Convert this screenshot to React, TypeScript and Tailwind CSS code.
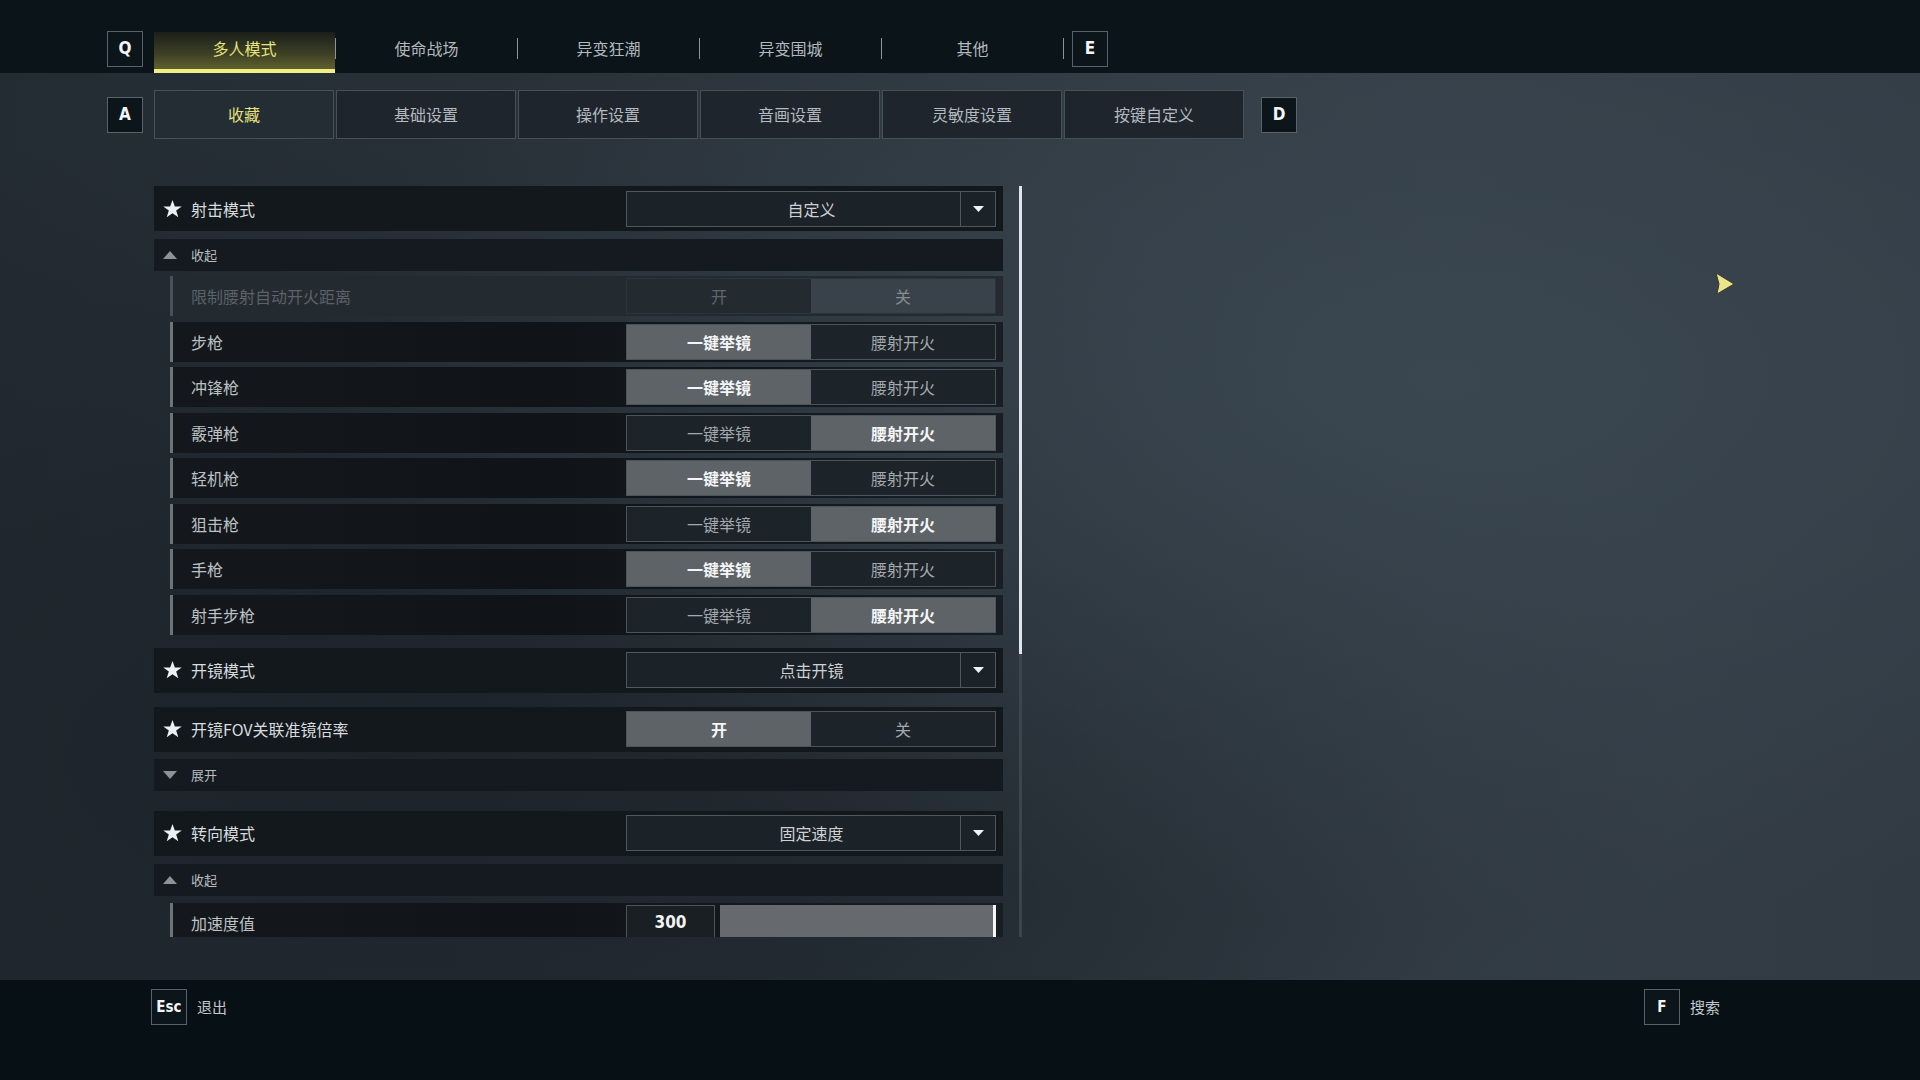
import React from 'react';

const FONT = { fontFamily: '"Noto Sans CJK SC", "Noto Sans", sans-serif' };
const KEYFONT = { fontFamily: '"DejaVu Sans Condensed", "Liberation Sans", sans-serif' };

const TOP_TABS = ['多人模式', '使命战场', '异变狂潮', '异变围城', '其他'];
const SUB_TABS = ['收藏', '基础设置', '操作设置', '音画设置', '灵敏度设置', '按键自定义'];

const WEAPONS: { label: string; sel: 0 | 1 }[] = [
  { label: '步枪', sel: 0 },
  { label: '冲锋枪', sel: 0 },
  { label: '霰弹枪', sel: 1 },
  { label: '轻机枪', sel: 0 },
  { label: '狙击枪', sel: 1 },
  { label: '手枪', sel: 0 },
  { label: '射手步枪', sel: 1 },
];

function Key({ k, small }: { k: string; small?: boolean }) {
  return (
    <div
      style={KEYFONT}
      className={`flex h-[36px] shrink-0 items-center justify-center border border-[#58626a] bg-[#0c1519] font-bold text-[#f2f4f5] ${
        small ? 'w-[36px] text-[15px]' : 'w-[36px] text-[17px]'
      }`}
    >
      {k}
    </div>
  );
}

function Star() {
  return (
    <svg width="19" height="18" viewBox="0 0 24 23" className="shrink-0">
      <path d="M12 0l3 8.2h8.8l-7.1 5.3 2.7 8.5L12 16.8 4.6 22l2.7-8.5L.2 8.2H9z" fill="#eef1f3" />
    </svg>
  );
}

function Tri({ up }: { up: boolean }) {
  return (
    <svg width="14" height="8" viewBox="0 0 14 8" className="shrink-0">
      <path d={up ? 'M7 0L14 8H0z' : 'M0 0h14L7 8z'} fill="#8b9298" />
    </svg>
  );
}

function Dropdown({ value }: { value: string }) {
  return (
    <div className="flex h-[36px] w-[370px] border border-[#4f575f] bg-[#1b2228]">
      <div className="flex flex-1 items-center justify-center pl-[36px] text-[16px] text-[#cdd1d4]">{value}</div>
      <div className="flex w-[35px] items-center justify-center border-l border-[#4f575f]">
        <svg width="11" height="6" viewBox="0 0 11 6">
          <path d="M0 0h11L5.5 6z" fill="#f1f3f4" />
        </svg>
      </div>
    </div>
  );
}

function Toggle({ options, sel, disabled }: { options: [string, string]; sel: 0 | 1; disabled?: boolean }) {
  return (
    <div className={`flex h-[36px] w-[370px] border ${disabled ? 'border-[#2c343a]' : 'border-[#4b535b]'}`}>
      {options.map((o, i) => {
        const on = i === sel;
        let cls = '';
        if (disabled) cls = on ? 'bg-[#39414a] text-[#858c92]' : 'bg-[#232a30] text-[#5f666c]';
        else cls = on ? 'bg-[#5e6368] text-[#f4f5f6] font-bold' : 'bg-[#1c2329] text-[#a3a9ae]';
        return (
          <div key={o} className={`flex flex-1 items-center justify-center text-[16px] ${cls}`}>
            {o}
          </div>
        );
      })}
    </div>
  );
}

function MainRow({ label, children, className = '' }: { label: string; children: React.ReactNode; className?: string }) {
  return (
    <div className={`flex h-[45px] items-center bg-[#13181d] pr-[7px] ${className}`}>
      <div className="flex flex-1 items-center gap-[9px] pl-[9px]">
        <Star />
        <span className="text-[16px] text-[#d8dcdf]">{label}</span>
      </div>
      {children}
    </div>
  );
}

function Fold({ up, className = '' }: { up: boolean; className?: string }) {
  return (
    <div className={`flex h-[32px] items-center gap-[14px] bg-[#141a1f] pl-[9px] ${className}`}>
      <Tri up={up} />
      <span className="text-[13px] text-[#b8bdc1]">{up ? '收起' : '展开'}</span>
    </div>
  );
}

function SubRow({ label, children, disabled, className = '' }: { label: string; children: React.ReactNode; disabled?: boolean; className?: string }) {
  return (
    <div
      className={`ml-[16px] flex h-[40px] items-center border-l-[3px] pr-[7px] ${
        disabled ? 'border-[#4a5157] bg-[#232a30]' : 'border-[#6d747a] bg-[linear-gradient(90deg,#14181c_0%,#101418_45%,#181e23_100%)]'
      } ${className}`}
    >
      <span className={`flex-1 pl-[18px] text-[16px] ${disabled ? 'text-[#5b6268]' : 'text-[#bcc1c5]'}`}>{label}</span>
      {children}
    </div>
  );
}

export default function App() {
  return (
    <div
      style={FONT}
      className="relative flex h-[1080px] w-[1920px] flex-col overflow-hidden bg-[radial-gradient(ellipse_at_75%_35%,#3a4650_0%,transparent_55%),radial-gradient(ellipse_at_20%_70%,#1c2329_0%,transparent_60%),linear-gradient(90deg,#242c33_0%,#2b343c_45%,#343e47_75%,#313a43_100%)]"
    >
      {/* top tabs */}
      <header className="flex h-[73px] shrink-0 items-start bg-[#0a1419] pl-[107px] pt-[31px]">
        <Key k="Q" />
        <div className="ml-[11px] mt-[1px] flex h-[41px] items-start">
          {TOP_TABS.map((t, i) => (
            <React.Fragment key={t}>
              {i === 0 ? (
                <div className="flex h-[41px] w-[181px] flex-col bg-[linear-gradient(180deg,#1a1f1a_0%,#3f4125_55%,#6a6a30_100%)]">
                  <div className="flex flex-1 items-center justify-center pb-[5px] text-[16px] text-[#e6e47a]">{t}</div>
                  <div className="h-[4px] bg-[#f0ee86]" />
                </div>
              ) : (
                <div className="flex h-[31px] w-[181px] items-center justify-center text-[16px] text-[#b3b9be]">{t}</div>
              )}
              <div className="mt-[6px] h-[21px] w-[1px] bg-[#8c949a]" />
            </React.Fragment>
          ))}
        </div>
        <div className="ml-[8px]">
          <Key k="E" />
        </div>
      </header>

      <main className="flex flex-1 flex-col">
        {/* sub tabs */}
        <div className="mt-[17px] flex h-[49px] items-center pl-[107px]">
          <Key k="A" />
          <div className="ml-[11px] flex gap-[2px]">
            {SUB_TABS.map((t, i) => (
              <div
                key={t}
                className={`flex h-[49px] w-[180px] items-center justify-center border border-[#465059] pb-[2px] text-[16px] ${
                  i === 0 ? 'bg-[#252d34] text-[#e4e27a]' : 'bg-[#1e252c] text-[#b4babf]'
                }`}
              >
                {t}
              </div>
            ))}
          </div>
          <div className="ml-[17px]">
            <Key k="D" />
          </div>
        </div>

        {/* settings list */}
        <div className="mt-[47px] flex pl-[154px]">
          <div className="h-[751px] w-[849px] overflow-hidden">
            <MainRow label="射击模式">
              <Dropdown value="自定义" />
            </MainRow>
            <Fold up className="mt-[8px]" />
            <SubRow label="限制腰射自动开火距离" disabled className="mt-[5px]">
              <Toggle options={['开', '关']} sel={1} disabled />
            </SubRow>
            {WEAPONS.map((w) => (
              <SubRow key={w.label} label={w.label} className="mt-[5.5px]">
                <Toggle options={['一键举镜', '腰射开火']} sel={w.sel} />
              </SubRow>
            ))}
            <MainRow label="开镜模式" className="mt-[13px]">
              <Dropdown value="点击开镜" />
            </MainRow>
            <MainRow label="开镜FOV关联准镜倍率" className="mt-[14px]">
              <Toggle options={['开', '关']} sel={0} />
            </MainRow>
            <Fold up={false} className="mt-[7px]" />
            <MainRow label="转向模式" className="mt-[20px]">
              <Dropdown value="固定速度" />
            </MainRow>
            <Fold up className="mt-[8px]" />
            <SubRow label="加速度值" className="mt-[7px]">
              <div className="flex h-[36px] w-[370px] items-stretch">
                <div
                  style={KEYFONT}
                  className="flex w-[89px] items-center justify-center border border-[#4b535b] bg-[#1a1f24] text-[17px] font-bold text-[#f2f4f5]"
                >
                  300
                </div>
                <div className="ml-[5px] flex flex-1 justify-end bg-[#66696d]">
                  <div className="w-[3px] bg-[#f4f6f7]" />
                </div>
              </div>
            </SubRow>
          </div>
          <div className="ml-[16px] flex h-[751px] w-[3px] flex-col bg-[#3c454d]">
            <div className="h-[468px] bg-[#dfe5ea]" />
          </div>
        </div>
      </main>

      {/* footer */}
      <footer className="flex h-[100px] shrink-0 items-start justify-between bg-[#071014] pl-[151px] pr-[200px] pt-[9px]">
        <div className="flex items-center gap-[10px]">
          <Key k="Esc" small />
          <span className="text-[15px] text-[#c3c8cc]">退出</span>
        </div>
        <div className="flex items-center gap-[10px]">
          <Key k="F" small />
          <span className="text-[15px] text-[#c3c8cc]">搜索</span>
        </div>
      </footer>

      {/* mouse cursor */}
      <svg width="22" height="24" viewBox="0 0 22 24" className="absolute left-[1714px] top-[272px]">
        <path d="M2 1L20 12 3 22 5 12z" fill="#e9e58c" stroke="#3b3a1e" strokeWidth="1" />
      </svg>
    </div>
  );
}
